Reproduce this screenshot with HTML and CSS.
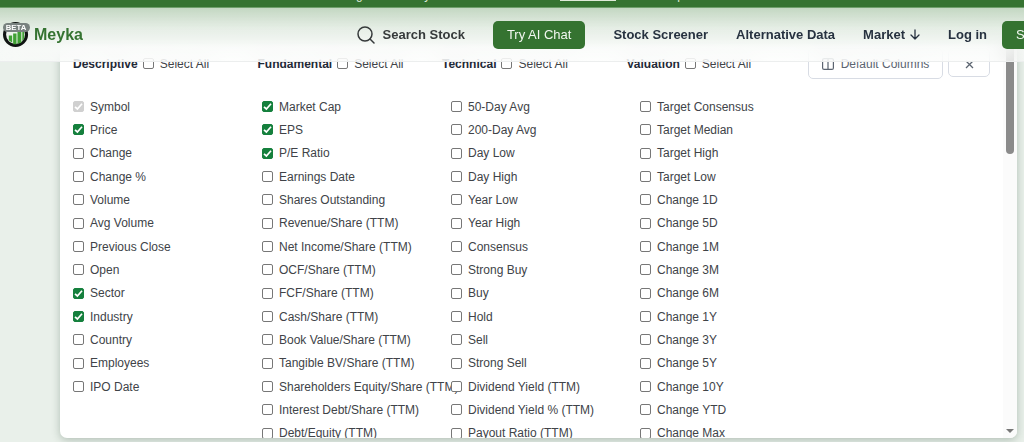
FILE: index.html
```html
<!DOCTYPE html>
<html lang="en">
<head>
<meta charset="utf-8">
<title>Meyka</title>
<link rel="stylesheet" href="styles.css">
</head>
<body>
<div class="top">
  <div class="banner"><span>g</span><span>y</span><a href="#" class="banner-link" aria-label="Offer"></a><span>p</span></div>
  <header class="header">
    <a class="brand" href="#">
      <svg class="logo" viewBox="0 0 30 28" aria-hidden="true">
        <circle cx="14" cy="14" r="11.4" fill="#edf3ec" stroke="#101412" stroke-width="3.2"/>
        <path d="M7 15h3.500v7.500L7 20zM11.500 13h3.500v11h-3.500zM16 10h4v12.500l-4 1zM21 9h2v9l-2 3z" fill="#40a035"/>
        <rect x="1" y="2" width="28" height="9.500" rx="4.700" fill="#78817f"/>
        <text x="14.500" y="9.500" text-anchor="middle" class="beta">BETA</text>
      </svg>
      <span>Meyka</span>
    </a>
    <nav class="nav">
      <button class="search" type="button">
        <svg width="18" height="18" viewBox="0 0 18 18" fill="none" stroke="currentColor" stroke-width="1.500" stroke-linecap="round" aria-hidden="true"><circle cx="8" cy="8" r="7"/><path d="M13 13l4 4"/></svg>
        <span>Search Stock</span>
      </button>
      <button class="cta" type="button">Try AI Chat</button>
      <a href="#">Stock Screener</a>
      <a href="#">Alternative Data</a>
      <a href="#" class="market">Market
        <svg width="10" height="11" viewBox="0 0 10 11" fill="none" stroke="currentColor" stroke-width="1.300" stroke-linecap="round" stroke-linejoin="round" aria-hidden="true"><path d="M5 1v9M1 6l4 4 4-4"/></svg>
      </a>
      <a href="#" class="login">Log in</a>
      <button class="cta signup" type="button">S</button>
    </nav>
  </header>
</div>
<main class="page">
  <section class="panel">
    <div class="content">
      <div class="toolbar">
        <div class="group"><h2>Descriptive</h2><label><input type="checkbox">Select All</label></div>
        <div class="group"><h2>Fundamental</h2><label><input type="checkbox">Select All</label></div>
        <div class="group"><h2>Technical</h2><label><input type="checkbox">Select All</label></div>
        <div class="group"><h2>Valuation</h2><label><input type="checkbox">Select All</label></div>
        <div class="actions">
          <button class="outline" type="button">
            <svg width="12" height="12" viewBox="0 0 12 12" fill="none" stroke="currentColor" stroke-width="1.200" aria-hidden="true"><rect x=".6" y=".6" width="10.800" height="10.800" rx="1.500"/><path d="M6 0v12"/></svg>
            Default Columns
          </button>
          <button class="outline close" type="button" aria-label="Close">
            <svg width="9" height="9" viewBox="0 0 9 9" stroke="currentColor" stroke-width="1.300" aria-hidden="true"><path d="M1 1l7 7M8 1L1 8"/></svg>
          </button>
        </div>
      </div>
      <div class="columns">
        <div class="column">
          <label><input type="checkbox" checked disabled>Symbol</label>
          <label><input type="checkbox" checked>Price</label>
          <label><input type="checkbox">Change</label>
          <label><input type="checkbox">Change %</label>
          <label><input type="checkbox">Volume</label>
          <label><input type="checkbox">Avg Volume</label>
          <label><input type="checkbox">Previous Close</label>
          <label><input type="checkbox">Open</label>
          <label><input type="checkbox" checked>Sector</label>
          <label><input type="checkbox" checked>Industry</label>
          <label><input type="checkbox">Country</label>
          <label><input type="checkbox">Employees</label>
          <label><input type="checkbox">IPO Date</label>
        </div>
        <div class="column">
          <label><input type="checkbox" checked>Market Cap</label>
          <label><input type="checkbox" checked>EPS</label>
          <label><input type="checkbox" checked>P/E Ratio</label>
          <label><input type="checkbox">Earnings Date</label>
          <label><input type="checkbox">Shares Outstanding</label>
          <label><input type="checkbox">Revenue/Share (TTM)</label>
          <label><input type="checkbox">Net Income/Share (TTM)</label>
          <label><input type="checkbox">OCF/Share (TTM)</label>
          <label><input type="checkbox">FCF/Share (TTM)</label>
          <label><input type="checkbox">Cash/Share (TTM)</label>
          <label><input type="checkbox">Book Value/Share (TTM)</label>
          <label><input type="checkbox">Tangible BV/Share (TTM)</label>
          <label><input type="checkbox">Shareholders Equity/Share (TTM)</label>
          <label><input type="checkbox">Interest Debt/Share (TTM)</label>
          <label><input type="checkbox">Debt/Equity (TTM)</label>
        </div>
        <div class="column">
          <label><input type="checkbox">50-Day Avg</label>
          <label><input type="checkbox">200-Day Avg</label>
          <label><input type="checkbox">Day Low</label>
          <label><input type="checkbox">Day High</label>
          <label><input type="checkbox">Year Low</label>
          <label><input type="checkbox">Year High</label>
          <label><input type="checkbox">Consensus</label>
          <label><input type="checkbox">Strong Buy</label>
          <label><input type="checkbox">Buy</label>
          <label><input type="checkbox">Hold</label>
          <label><input type="checkbox">Sell</label>
          <label><input type="checkbox">Strong Sell</label>
          <label><input type="checkbox">Dividend Yield (TTM)</label>
          <label><input type="checkbox">Dividend Yield % (TTM)</label>
          <label><input type="checkbox">Payout Ratio (TTM)</label>
        </div>
        <div class="column">
          <label><input type="checkbox">Target Consensus</label>
          <label><input type="checkbox">Target Median</label>
          <label><input type="checkbox">Target High</label>
          <label><input type="checkbox">Target Low</label>
          <label><input type="checkbox">Change 1D</label>
          <label><input type="checkbox">Change 5D</label>
          <label><input type="checkbox">Change 1M</label>
          <label><input type="checkbox">Change 3M</label>
          <label><input type="checkbox">Change 6M</label>
          <label><input type="checkbox">Change 1Y</label>
          <label><input type="checkbox">Change 3Y</label>
          <label><input type="checkbox">Change 5Y</label>
          <label><input type="checkbox">Change 10Y</label>
          <label><input type="checkbox">Change YTD</label>
          <label><input type="checkbox">Change Max</label>
        </div>
      </div>
    </div>
    <div class="scrollbar" aria-hidden="true"><div class="thumb"></div><div class="arrow"></div></div>
  </section>
</main>
</body>
</html>
```

FILE: styles.css
```css
* { box-sizing: border-box; }
body {
  margin: 0;
  height: 100vh;
  overflow: hidden;
  background: #e9f0ea;
  color: #404348;
  font: 12px/16px "Liberation Sans", Arial, sans-serif;
}
button { font: inherit; color: inherit; border: 0; padding: 0; background: none; }
a { color: inherit; text-decoration: none; }

.top { position: fixed; inset: 0 0 auto; z-index: 2; }
.banner {
  display: flex;
  align-items: flex-end;
  height: 8px;
  padding: 0 340px 4px 356px;
  justify-content: space-between;
  overflow: hidden;
  background: #357331;
  border-bottom: 1px solid #6f9f6c;
  color: #dfead9;
}
.banner-link { width: 56px; height: 16px; margin-left: 68px; margin-bottom: 2px; border-bottom: 1px solid #dfead9; }
.header {
  display: flex;
  align-items: center;
  justify-content: space-between;
  height: 54px;
  padding-left: 2px;
  border-bottom: 1px solid #eceeee;
  background: linear-gradient(#c3d7c2 0, rgba(229, 237, 229, .95) 38%, rgba(252, 253, 252, .7) 75%);
  backdrop-filter: blur(10px);
  overflow: hidden;
}
.brand { display: flex; align-items: center; gap: 3px; color: #357331; font-size: 16px; font-weight: bold; }
.logo { width: 29px; height: 27px; }
.beta { fill: #fff; font-size: 8px; font-weight: bold; }
.nav { display: flex; align-items: center; flex: none; margin-right: -24px; gap: 28px; color: #273240; font-size: 13px; font-weight: bold; white-space: nowrap; }
.search { display: flex; align-items: center; gap: 8px; color: #363a3b; }
.cta { height: 28px; padding: 0 14px; border-radius: 5px; background: #357331; color: #f2f7f1; font-weight: normal; }
.signup { width: 46px; text-align: left; margin-left: -13px; }
.market { display: flex; align-items: center; gap: 5px; }

.page { height: 100vh; padding: 44px 7px 4px 60px; }
.panel {
  display: flex;
  height: 100%;
  overflow: hidden;
  background: #fff;
  border-radius: 7px;
  box-shadow: 0 2px 8px rgba(30, 60, 40, .28);
}
.content { flex: 1; padding: 4px 13px 0; min-width: 0; }
.toolbar { display: flex; height: 31px; align-items: center; white-space: nowrap; }
.group { display: flex; align-items: center; gap: 5px; width: 185px; }
h2 { margin: 0; font-size: 12px; line-height: 16px; color: #1f2937; }
label { display: flex; align-items: center; gap: 6px; white-space: nowrap; }
input {
  appearance: none;
  flex: none;
  width: 11px;
  height: 11px;
  margin: 0;
  border: 1px solid #777;
  border-radius: 2px;
  background: #fff;
}
input:checked {
  border-color: #15803d;
  background: #15803d url("data:image/svg+xml,%3Csvg xmlns='http://www.w3.org/2000/svg' viewBox='0 0 9 9'%3E%3Cpath d='M1 4.800 3.400 7 8 1.800' fill='none' stroke='white' stroke-width='1.700'/%3E%3C/svg%3E");
}
input:checked:disabled { border-color: #d0d0d0; background-color: #d0d0d0; }
.actions { display: flex; gap: 5px; margin-left: -3px; }
.outline {
  display: flex;
  align-items: center;
  justify-content: center;
  gap: 7px;
  width: 135px;
  height: 31px;
  border: 1px solid #d8dce4;
  border-radius: 5px;
  color: #5b6470;
}
.close { width: 42px; height: 29px; padding-top: 4px; }
.columns { display: grid; grid-template-columns: repeat(4, 189px); height: 350px; margin-top: 16px; }
.column { display: grid; grid-template-rows: repeat(15, 1fr); }
.scrollbar {
  display: flex;
  flex-direction: column;
  align-items: center;
  justify-content: space-between;
  width: 14px;
  padding-bottom: 5px;
  background: #fbfbfb;
}
.thumb { width: 8px; height: 110px; border-radius: 4px; background: #8b8b8b; }
.arrow { border: 4px solid transparent; border-top-color: #777; border-bottom: 0; }
```
